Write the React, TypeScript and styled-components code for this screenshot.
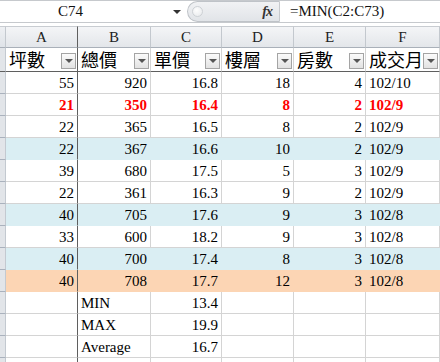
import React from 'react'
import styled, { createGlobalStyle } from 'styled-components'

const GRID = '#d4d4d4'
const FREEZE = '#5f5f5f'
const BLUE = '#daeef3'
const PEACH = '#fcd5b4'

const GlobalStyle = createGlobalStyle`
  html, body {
    margin: 0;
    padding: 0;
    background: #fff;
    overflow: hidden;
  }
  body {
    font-family: 'Liberation Serif', 'Noto Sans CJK TC', serif;
    color: #000;
  }
`

const Window = styled.div`
  width: 440px;
  height: 362px;
  overflow: hidden;
`

// formula bar
const FormulaBar = styled.div`
  display: flex;
  height: 23px;
  box-sizing: border-box;
  border-top: 1px solid #c6c9cd;
  border-bottom: 1px solid #c6c9cd;
`

const NameBox = styled.div`
  width: 187px;
  flex: none;
  display: flex;
  align-items: center;
  box-sizing: border-box;
  padding-left: 58px;
  font-family: 'Liberation Serif', serif;
  font-size: 15px;
  color: #111;
`

const DropArrow = styled.span`
  margin-left: auto;
  margin-right: 6px;
  width: 0;
  height: 0;
  border-left: 4px solid transparent;
  border-right: 4px solid transparent;
  border-top: 4px solid #333;
`

const FxPill = styled.div`
  width: 93px;
  flex: none;
  box-sizing: border-box;
  display: flex;
  align-items: center;
  border: 1px solid #bfc3c8;
  border-right: 1px solid #c6c9cd;
  border-radius: 11px 0 0 11px;
  background: linear-gradient(#f1f2f4, #e1e4e8);
`

const Knob = styled.span`
  width: 9px;
  height: 9px;
  margin-left: 4px;
  border-radius: 50%;
  background: radial-gradient(circle at 40% 35%, #fdfdfd, #e6e8eb);
  border: 1px solid #cdd1d5;
`

const FxLabel = styled.span`
  margin-left: auto;
  margin-right: 7px;
  font-family: 'Liberation Serif', serif;
  font-style: italic;
  font-weight: 700;
  font-size: 14px;
  color: #333;
  letter-spacing: -1px;
`

const FormulaText = styled.div`
  display: flex;
  align-items: center;
  padding-left: 10px;
  font-family: 'Liberation Serif', serif;
  font-size: 15px;
  color: #111;
`

// sheet
const Sheet = styled.div`
  margin-top: 3px;
  display: grid;
  grid-template-columns: 6px 72px 73px 71px 72px 72px 74px;
  grid-template-rows: 22px 24px;
  grid-auto-rows: 22px;
`

const Corner = styled.div`
  box-sizing: border-box;
  background: linear-gradient(#eef0f3, #dfe3e8);
  border-top: 1px solid #c8ccd1;
  border-right: 1px solid #c3c8ce;
  border-bottom: 1px solid #a9b0b9;
`

const ColHead = styled.div<{ $freeze?: boolean }>`
  box-sizing: border-box;
  display: flex;
  align-items: center;
  justify-content: center;
  background: linear-gradient(#f4f5f7, #e3e6ea);
  border-top: 1px solid #c8ccd1;
  border-bottom: 1px solid #a9b0b9;
  border-right: 1px solid ${(p) => (p.$freeze ? FREEZE : '#c3c8ce')};
  font-family: 'Liberation Serif', serif;
  font-size: 15px;
  color: #222;
`

const RowHead = styled.div<{ $dark?: boolean }>`
  box-sizing: border-box;
  background: #e2e5e9;
  border-right: 1px solid #c3c9d0;
  border-bottom: 1px solid ${(p) => (p.$dark ? FREEZE : '#aab2bd')};
`

const HeadCell = styled.div<{ $freeze?: boolean }>`
  box-sizing: border-box;
  display: flex;
  align-items: flex-end;
  padding: 0 1px 2px 3px;
  border-bottom: 1px solid ${FREEZE};
  border-right: 1px solid ${(p) => (p.$freeze ? FREEZE : GRID)};
  font-family: 'Noto Sans CJK TC', sans-serif;
  font-size: 18px;
`

const HeadLabel = styled.span<{ $clip?: boolean }>`
  flex: 1;
  min-width: 0;
  white-space: nowrap;
  line-height: 20px;
  overflow: ${(p) => (p.$clip ? 'hidden' : 'visible')};
`

const FilterButton = styled.span`
  position: relative;
  flex: none;
  width: 15px;
  height: 16px;
  box-sizing: border-box;
  display: flex;
  align-items: center;
  justify-content: center;
  border: 1px solid #a4a4a4;
  background: linear-gradient(#fbfbfb, #e2e2e2);

  &::after {
    content: '';
    width: 0;
    height: 0;
    border-left: 4px solid transparent;
    border-right: 4px solid transparent;
    border-top: 4px solid #555;
  }
`

const Cell = styled.div<{ $fill?: string; $left?: boolean; $freeze?: boolean; $hot?: boolean }>`
  box-sizing: border-box;
  display: flex;
  align-items: flex-end;
  justify-content: ${(p) => (p.$left ? 'flex-start' : 'flex-end')};
  padding: 0 3px 1px;
  font-size: 15px;
  line-height: 18px;
  white-space: nowrap;
  overflow: hidden;
  background: ${(p) => p.$fill ?? '#fff'};
  border-bottom: 1px solid ${(p) => p.$fill ?? GRID};
  border-right: 1px solid ${(p) => (p.$freeze ? FREEZE : p.$fill ?? GRID)};
  color: ${(p) => (p.$hot ? '#ff0000' : '#000')};
  font-weight: ${(p) => (p.$hot ? 700 : 400)};
`

type Row = {
  values: (string | number)[]
  fill?: string
  hot?: boolean
}

const letters = ['A', 'B', 'C', 'D', 'E', 'F']
const headers = ['坪數', '總價', '單價', '樓層', '房數', '成交月份']

const rows: Row[] = [
  { values: [55, 920, '16.8', 18, 4, '102/10'] },
  { values: [21, 350, '16.4', 8, 2, '102/9'], hot: true },
  { values: [22, 365, '16.5', 8, 2, '102/9'] },
  { values: [22, 367, '16.6', 10, 2, '102/9'], fill: BLUE },
  { values: [39, 680, '17.5', 5, 3, '102/9'] },
  { values: [22, 361, '16.3', 9, 2, '102/9'] },
  { values: [40, 705, '17.6', 9, 3, '102/8'], fill: BLUE },
  { values: [33, 600, '18.2', 9, 3, '102/8'] },
  { values: [40, 700, '17.4', 8, 3, '102/8'], fill: BLUE },
  { values: [40, 708, '17.7', 12, 3, '102/8'], fill: PEACH },
]

const summary = [
  ['MIN', '13.4'],
  ['MAX', '19.9'],
  ['Average', '16.7'],
  ['', ''],
]

const App: React.FC = () => {
  return (
    <Window>
      <GlobalStyle />
      <FormulaBar>
        <NameBox>
          C74
          <DropArrow />
        </NameBox>
        <FxPill>
          <Knob />
          <FxLabel>fx</FxLabel>
        </FxPill>
        <FormulaText>=MIN(C2:C73)</FormulaText>
      </FormulaBar>

      <Sheet>
        <Corner />
        {letters.map((l, i) => (
          <ColHead key={l} $freeze={i === 0}>
            {l}
          </ColHead>
        ))}

        <RowHead $dark />
        {headers.map((h, i) => (
          <HeadCell key={h} $freeze={i === 0}>
            <HeadLabel $clip={i === headers.length - 1}>{h}</HeadLabel>
            <FilterButton />
          </HeadCell>
        ))}

        {rows.map((r, ri) => (
          <React.Fragment key={`r${ri}`}>
            <RowHead />
            {r.values.map((v, ci) => (
              <Cell
                key={ci}
                $fill={r.fill}
                $hot={r.hot}
                $freeze={ci === 0}
                $left={ci === 5}
              >
                {v}
              </Cell>
            ))}
          </React.Fragment>
        ))}

        {summary.map(([label, val], si) => (
          <React.Fragment key={`s${si}`}>
            <RowHead />
            <Cell $freeze />
            <Cell $left>{label}</Cell>
            <Cell>{val}</Cell>
            <Cell />
            <Cell />
            <Cell />
          </React.Fragment>
        ))}
      </Sheet>
    </Window>
  )
}

export default App
